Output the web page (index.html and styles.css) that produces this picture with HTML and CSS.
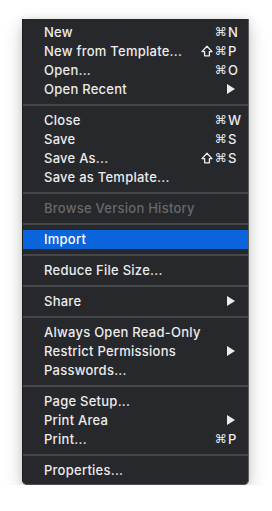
FILE: index.html
```html
<!DOCTYPE html>
<html lang="en">
<head>
    <meta charset="UTF-8">
    <title>File Menu</title>
    <link rel="stylesheet" href="styles.css">
</head>
<body>
    <div class="menu">
        <div class="item"><span class="label">New</span><span class="mods">⌘</span><span class="key">N</span></div>
        <div class="item"><span class="label">New from Template...</span><span class="mods"><svg class="shift" viewBox="0 0 12 12"><path d="M6 1.2 L11 6.6 H8.4 V10.8 H3.6 V6.6 H1 Z"/></svg>⌘</span><span class="key">P</span></div>
        <div class="item"><span class="label">Open...</span><span class="mods">⌘</span><span class="key">O</span></div>
        <div class="item"><span class="label">Open Recent</span><span class="arrow"></span></div>
        <div class="sep"></div>
        <div class="item"><span class="label">Close</span><span class="mods">⌘</span><span class="key">W</span></div>
        <div class="item"><span class="label">Save</span><span class="mods">⌘</span><span class="key">S</span></div>
        <div class="item"><span class="label">Save As...</span><span class="mods"><svg class="shift" viewBox="0 0 12 12"><path d="M6 1.2 L11 6.6 H8.4 V10.8 H3.6 V6.6 H1 Z"/></svg>⌘</span><span class="key">S</span></div>
        <div class="item"><span class="label">Save as Template...</span></div>
        <div class="sep"></div>
        <div class="item disabled"><span class="label">Browse Version History</span></div>
        <div class="sep"></div>
        <div class="item active"><span class="label">Import</span></div>
        <div class="sep"></div>
        <div class="item"><span class="label">Reduce File Size...</span></div>
        <div class="sep"></div>
        <div class="item"><span class="label">Share</span><span class="arrow"></span></div>
        <div class="sep"></div>
        <div class="item"><span class="label">Always Open Read-Only</span></div>
        <div class="item"><span class="label">Restrict Permissions</span><span class="arrow"></span></div>
        <div class="item"><span class="label">Passwords...</span></div>
        <div class="sep"></div>
        <div class="item"><span class="label">Page Setup...</span></div>
        <div class="item"><span class="label">Print Area</span><span class="arrow"></span></div>
        <div class="item"><span class="label">Print...</span><span class="mods">⌘</span><span class="key">P</span></div>
        <div class="sep"></div>
        <div class="item"><span class="label">Properties...</span></div>
    </div>
</body>
</html>
```

FILE: styles.css
```css
* {
    margin: 0;
    padding: 0;
    box-sizing: border-box;
}

body {
    background: #ffffff;
    font-family: 'Inter', 'Liberation Sans', Arial, sans-serif;
}

.menu {
    margin: 19px 0 0 22px;
    width: 227px;
    padding: 4px 0;
    background: #27282c;
    border-left: 1px solid #1c1c1f;
    border-right: 1px solid #5c5d60;
    border-bottom: 1px solid #4a4b4e;
    border-radius: 0 0 5px 5px;
    box-shadow: 0 6px 18px rgba(0, 0, 0, 0.22), 0 0 6px rgba(0, 0, 0, 0.08);
}

.item {
    display: flex;
    align-items: center;
    height: 19px;
    padding: 0 6px 1px 21px;
    color: #ececec;
    font-size: 13px;
    font-weight: 500;
    letter-spacing: 0.25px;
}

.item .label {
    flex: 1;
    white-space: nowrap;
}

.item .mods {
    display: flex;
    align-items: center;
    font-family: 'DejaVu Sans', sans-serif;
    font-size: 12px;
    margin-right: 1px;
}

.shift {
    width: 12px;
    height: 12px;
    margin-right: 2px;
    fill: none;
    stroke: #ececec;
    stroke-width: 1.3;
    stroke-linejoin: round;
}

.item .key {
    width: 14px;
    text-align: left;
}

.item .arrow {
    width: 0;
    height: 0;
    margin-right: 7px;
    border-top: 5px solid transparent;
    border-bottom: 5px solid transparent;
    border-left: 8px solid #ececec;
}

.item.disabled {
    color: #67686b;
}

.item.active {
    background: #0a64dc;
    color: #ffffff;
}

.sep {
    height: 2px;
    margin: 5px 0;
    background: #46474a;
}
```
